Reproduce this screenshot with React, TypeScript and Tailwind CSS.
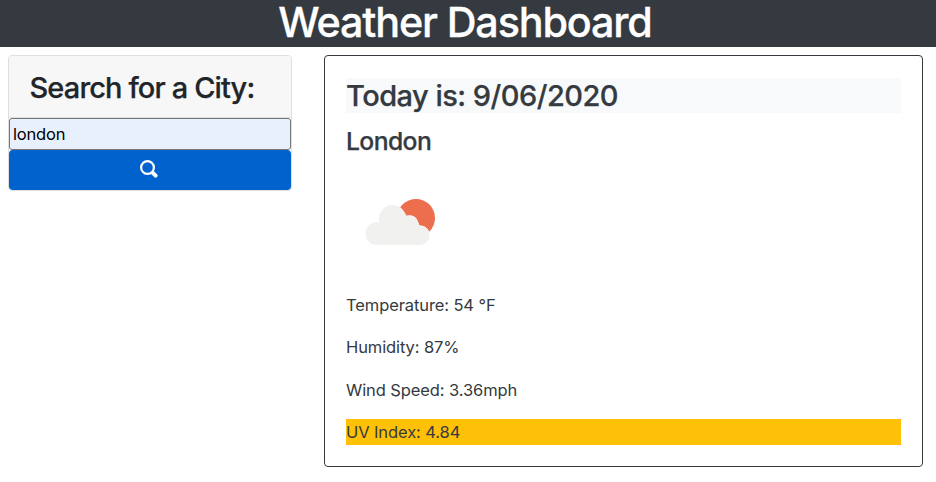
export default function App() {
  return (
    <div className="h-[482px] w-[936px] bg-white font-['Inter','Liberation_Sans',sans-serif] text-[#343a40]">
      <header className="flex h-[47px] justify-center bg-[#343a40] pr-[6px]">
        <h1 className="whitespace-nowrap text-[41.3px] leading-[45px] font-medium tracking-[-1.15px] text-white [-webkit-text-stroke:0.3px_white]">Weather Dashboard</h1>
      </header>
      <main className="flex items-start pt-2 pl-2">
        <section className="w-[284px] rounded-[4px] border border-[#dfdfdf] bg-white">
          <div className="h-[62px] rounded-t-[3px] border-b border-[#dfdfdf] bg-[#f7f7f7] pl-[20.5px]">
            <h2 className="whitespace-nowrap text-[29px] leading-[64px] font-medium tracking-[-0.87px] text-[#212529] [-webkit-text-stroke:0.25px_#212529]">Search for a City:</h2>
          </div>
          <input
            type="text"
            defaultValue="london"
            className="block h-[32px] w-full rounded-[3px] border border-[#767676] bg-[#e8f0fe] px-[3px] text-[16.5px] tracking-[-0.2px] text-black outline-none"
          />
          <button className="flex h-[40px] w-full items-center justify-center rounded-[4px] bg-[#0062cc] pr-[3px] pb-[2px]" aria-label="Search">
            <svg width="18" height="18" viewBox="0 0 18 18" fill="none" stroke="white" strokeLinecap="round">
              <circle cx="7.5" cy="7.5" r="6.4" strokeWidth="2.2" />
              <path d="M12.8 12.8L15.6 15.6" strokeWidth="4" />
            </svg>
          </button>
        </section>
        <section className="ml-[32px] h-[412px] w-[599px] rounded-[4px] border border-[#343a40] px-[21px] pt-[22px]">
          <h2 className="h-[35px] whitespace-nowrap bg-[#f8f9fa] text-[29px] leading-[36px] font-medium tracking-[-0.52px] [-webkit-text-stroke:0.25px_#343a40]">Today is: 9/06/2020</h2>
          <h3 className="mt-[13px] h-[31px] whitespace-nowrap text-[24.7px] leading-[31px] font-medium tracking-[-0.6px] [-webkit-text-stroke:0.25px_#343a40]">London</h3>
          <svg className="mt-[28px] block" width="107" height="107" viewBox="0 0 107 107">
            <circle cx="70" cy="33" r="19" fill="#ec6e4c" />
            <path
              d="M31 60C24 60 19.500 55 19.500 48.500C19.500 41.500 25 36.500 33 37C32 27 38 20 46.500 20C53 20 57.500 23.500 60 31.500C65 28.500 72 31 73 41C79 40 83.500 45 83.500 50C83.500 56 79 60 74 60Z"
              fill="#f1f1f0"
            />
            <path d="M50.500 22Q57.500 25 60 31.500Q69 29 73 41Q79 40.500 82.800 47" fill="none" stroke="#f1f1f0" strokeWidth="1.500" />
          </svg>
          <div className="whitespace-nowrap text-[16.500px] leading-[26px] tracking-[-0.1px]">
            <p className="mb-[16px] h-[26px]">Temperature: 54 °F</p>
            <p className="mb-[17px] h-[26px]">Humidity: 87%</p>
            <p className="mb-[16px] h-[26px]">Wind Speed: 3.36mph</p>
            <p className="h-[26px] bg-[#ffc107]">UV Index: 4.84</p>
          </div>
        </section>
      </main>
    </div>
  );
}
